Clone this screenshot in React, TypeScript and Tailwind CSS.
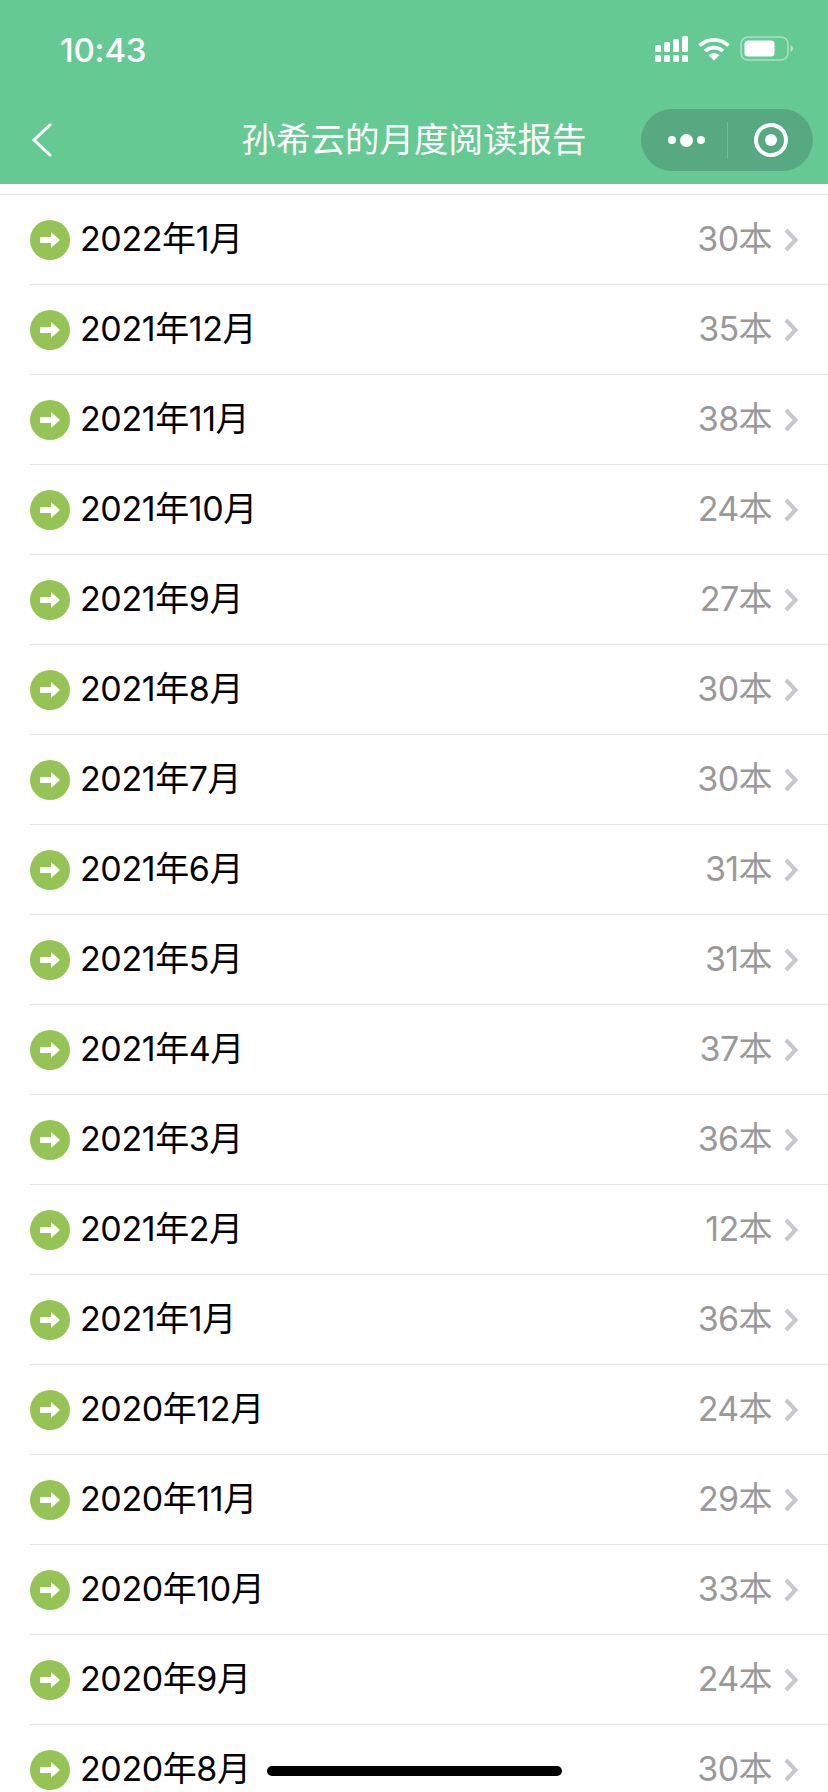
const rows = [
  ["2022年1月", "30本"],
  ["2021年12月", "35本"],
  ["2021年11月", "38本"],
  ["2021年10月", "24本"],
  ["2021年9月", "27本"],
  ["2021年8月", "30本"],
  ["2021年7月", "30本"],
  ["2021年6月", "31本"],
  ["2021年5月", "31本"],
  ["2021年4月", "37本"],
  ["2021年3月", "36本"],
  ["2021年2月", "12本"],
  ["2021年1月", "36本"],
  ["2020年12月", "24本"],
  ["2020年11月", "29本"],
  ["2020年10月", "33本"],
  ["2020年9月", "24本"],
  ["2020年8月", "30本"],
];

function SignalIcon() {
  return (
    <svg width="33" height="26" viewBox="0 0 33 26" fill="#fff">
      <rect x="0" y="9" width="6" height="7" rx="1.5" />
      <rect x="9" y="6" width="6" height="10" rx="1.5" />
      <rect x="18" y="3" width="6" height="13" rx="1.5" />
      <rect x="27" y="0" width="6" height="16" rx="1.5" />
      <rect x="0" y="19" width="6" height="7" rx="1.5" />
      <rect x="9" y="19" width="6" height="7" rx="1.5" />
      <rect x="18" y="19" width="6" height="7" rx="1.5" />
      <rect x="27" y="19" width="6" height="7" rx="1.5" />
    </svg>
  );
}

function WifiIcon() {
  return (
    <svg width="32" height="24" viewBox="0 0 32 24" fill="none" stroke="#fff" strokeWidth="3.6">
      <path d="M1.5 8.5C9.5 1 22.5 1 30.5 8.5" />
      <path d="M7 14C12 9.5 20 9.5 25 14" />
      <path d="M16 23.5L10.5 18C13.5 15.5 18.5 15.5 21.5 18Z" fill="#fff" stroke="none" />
    </svg>
  );
}

function BatteryIcon() {
  return (
    <svg width="54" height="26" viewBox="0 0 54 26">
      <rect x="1" y="1" width="47" height="23" rx="7" fill="none" stroke="#fff" strokeOpacity="0.45" strokeWidth="1.6" />
      <rect x="4.5" y="4.5" width="30" height="16" rx="3.5" fill="#fff" />
      <path d="M50.5 9C52.5 10 53 11.5 53 12.5C53 13.5 52.5 15 50.5 16Z" fill="#fff" fillOpacity="0.5" />
    </svg>
  );
}

function ArrowBadge() {
  return (
    <svg width="40" height="40" viewBox="0 0 40 40" className="shrink-0">
      <circle cx="20" cy="20" r="20" fill="#95c355" />
      <path d="M10 17H21V12L30 20L21 28V23H10Z" fill="#fff" />
    </svg>
  );
}

function Row({ month, count }: { month: string; count: string }) {
  return (
    <div className="ml-[30px] flex h-[90px] items-center border-b border-[#e5e5e5] pr-[30px]">
      <ArrowBadge />
      <span className="mb-[2px] ml-[10px] flex-1 text-[34px] leading-none tracking-[-0.4px] text-black">{month}</span>
      <span className="mb-[2px] text-[34px] leading-none tracking-[-0.6px] text-[#999999]">{count}</span>
      <svg width="14" height="24" viewBox="0 0 14 24" fill="none" stroke="#c7c7cc" strokeWidth="4" className="ml-[12px]">
        <path d="M2 2L11.5 12L2 22" />
      </svg>
    </div>
  );
}

export default function App() {
  return (
    <div className="relative h-[1792px] w-[828px] overflow-hidden bg-white font-['Inter','Noto_Sans_CJK_SC',sans-serif]">
      <header className="h-[184px] bg-[#65c994] text-white">
        <div className="flex h-[98px] items-center justify-between pl-[60px] pr-[34px]">
          <span className="mt-[2px] text-[33px] font-medium leading-none tracking-[-0.2px]">10:43</span>
          <div className="flex items-center gap-[10px]">
            <SignalIcon />
            <WifiIcon />
            <BatteryIcon />
          </div>
        </div>
        <div className="relative flex h-[86px] items-center justify-center">
          <svg width="24" height="36" viewBox="0 0 24 36" fill="none" stroke="#fff" strokeWidth="3" className="absolute left-[31px] top-[24px]">
            <path d="M20 2L3 18L20 34" />
          </svg>
          <span className="mb-[2px] text-[34.5px] leading-none">孙希云的月度阅读报告</span>
          <div className="absolute left-[641px] top-[11px] flex h-[62px] w-[172px] items-center rounded-full bg-[#57a981]">
            <div className="flex w-[86px] items-center justify-center gap-[4px] pl-[4px]">
              <span className="h-[8px] w-[8px] rounded-full bg-white" />
              <span className="h-[13px] w-[13px] rounded-full bg-white" />
              <span className="h-[8px] w-[8px] rounded-full bg-white" />
            </div>
            <div className="h-[37px] w-px bg-white/20" />
            <div className="flex flex-1 items-center justify-center">
              <div className="flex h-[34px] w-[34px] items-center justify-center rounded-full border-[4px] border-white">
                <span className="h-[12px] w-[12px] rounded-full bg-white" />
              </div>
            </div>
          </div>
        </div>
      </header>
      <main className="mt-[10px] border-t border-[#e5e5e5]">
        {rows.map(([month, count]) => (
          <Row key={month} month={month} count={count} />
        ))}
      </main>
      <div className="absolute left-[267px] top-[1766px] h-[10px] w-[295px] rounded-full bg-black" />
    </div>
  );
}
